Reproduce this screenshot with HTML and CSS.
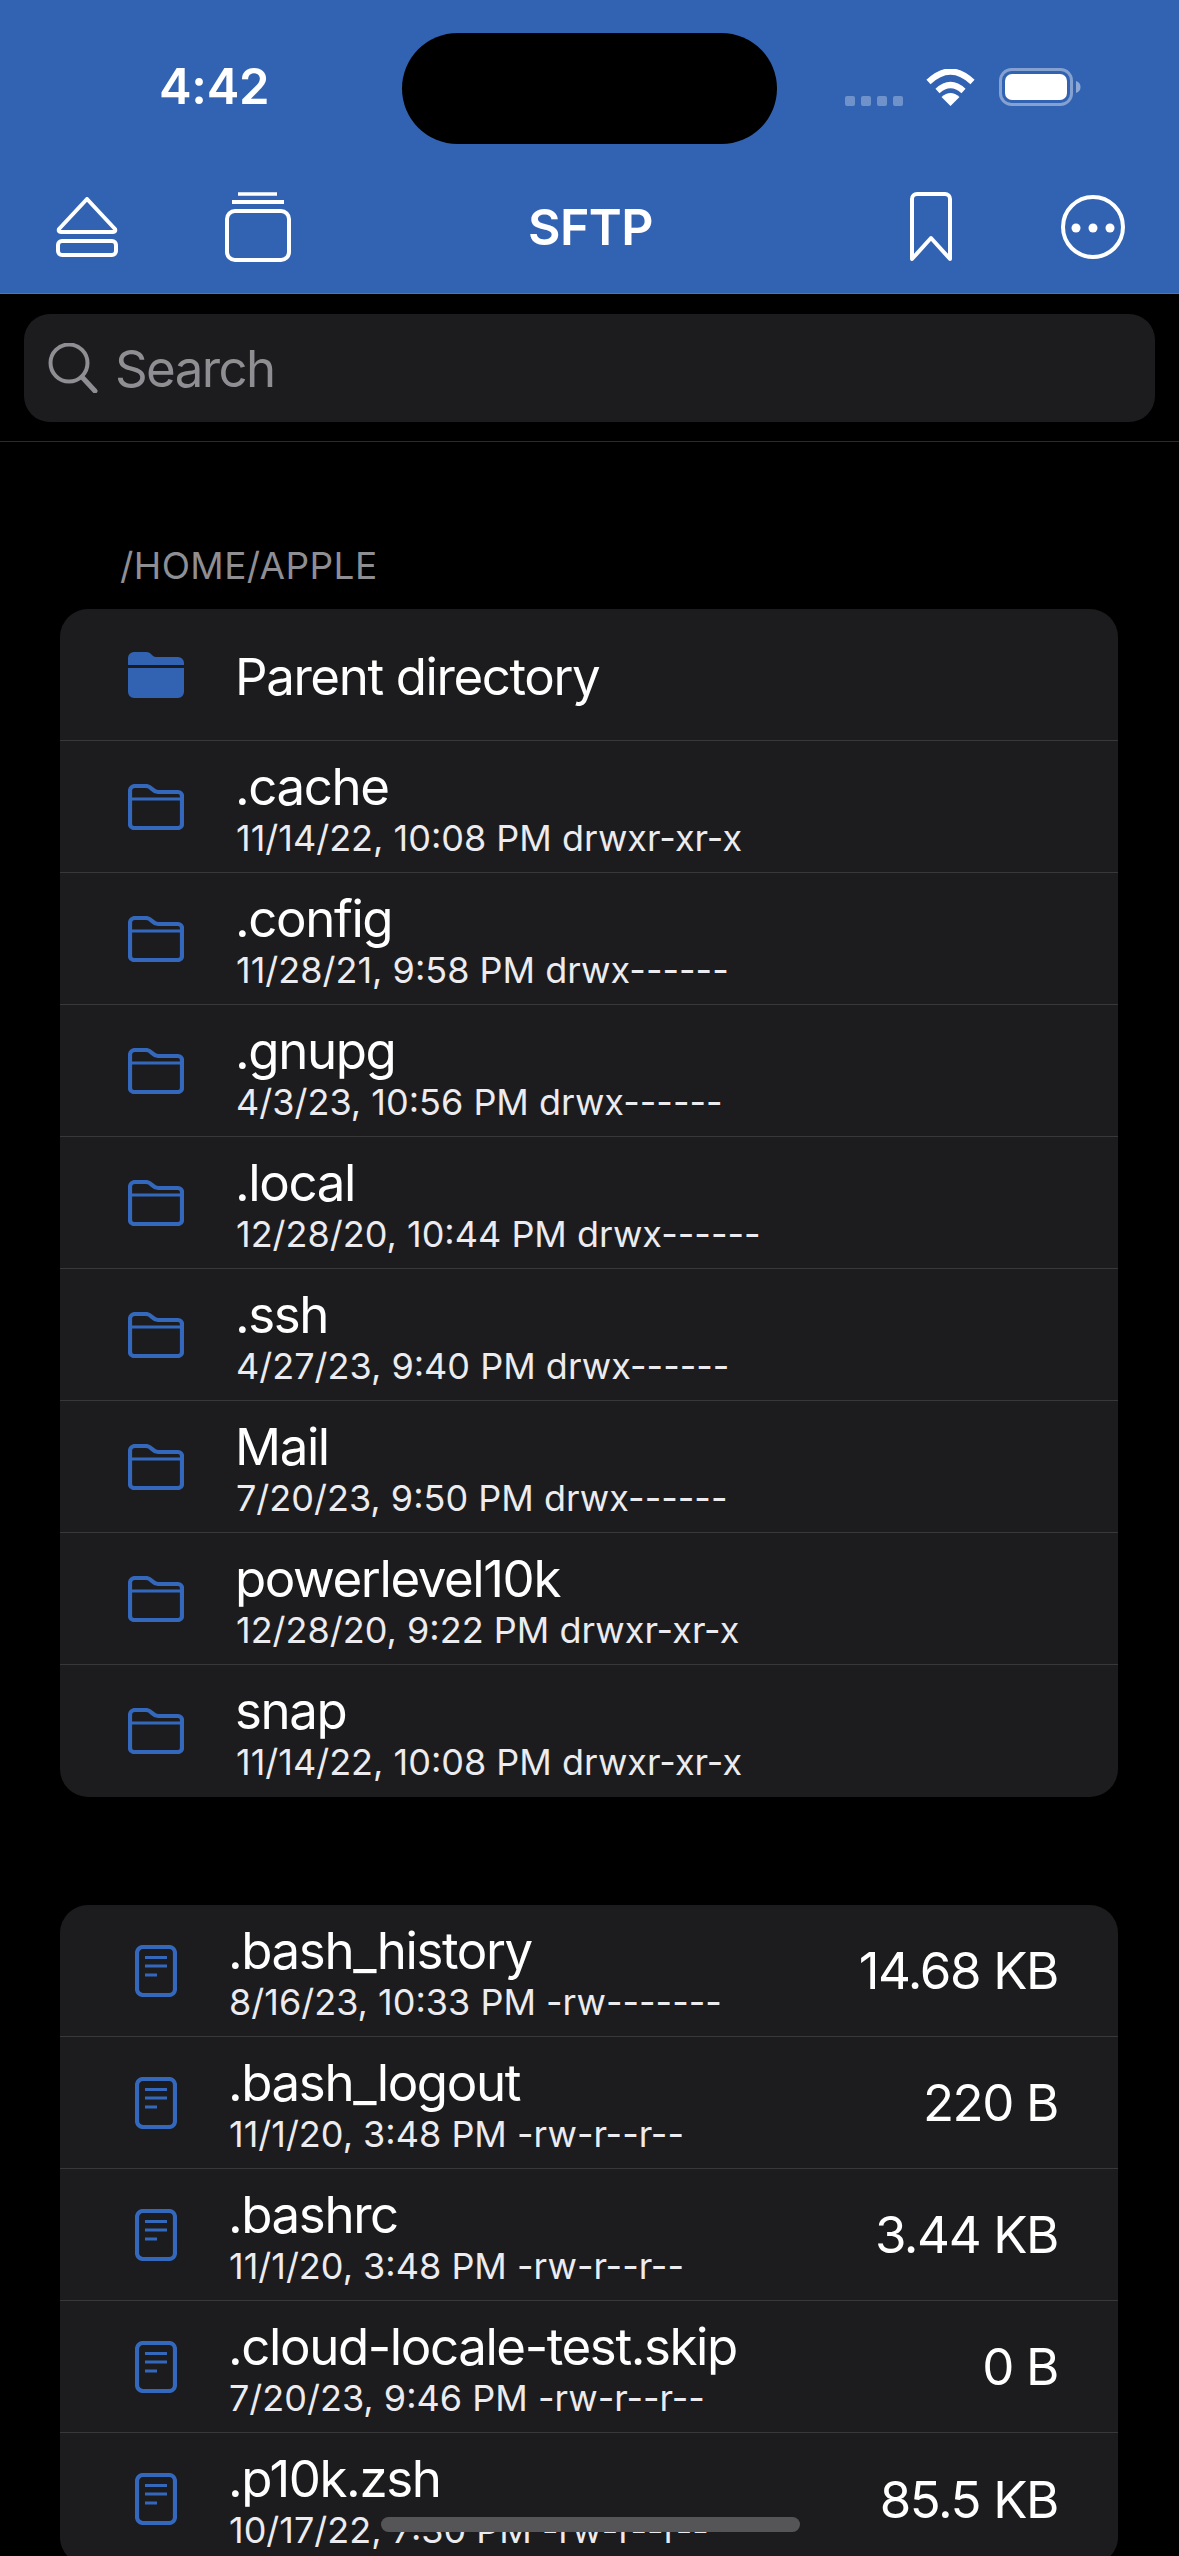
FILE: index.html
```html
<!DOCTYPE html>
<html lang="en">
<head>
    <meta charset="UTF-8">
    <meta name="viewport" content="width=device-width, initial-scale=1.0">
    <title>SFTP</title>
    <link rel="stylesheet" href="styles.css">
</head>
<body>
    <svg class="sprite" aria-hidden="true">
        <symbol id="folder-line" viewBox="0 0 56 46">
            <path d="M2 7a5 5 0 0 1 5-5h11c3 0 4 1 6 3s3 3 6 3h20a4 4 0 0 1 4 4v28a4 4 0 0 1-4 4H6a4 4 0 0 1-4-4Z" fill="none" stroke="#3468bd" stroke-width="4.200"/>
            <path d="M2 15H54" stroke="#3468bd" stroke-width="3"/>
        </symbol>
        <symbol id="folder-fill" viewBox="0 0 56 46">
            <path d="M0 6a6 6 0 0 1 6-6h12c3 0 4 1 6 3s3 2 6 2h20a6 6 0 0 1 6 6v29a6 6 0 0 1-6 6H6a6 6 0 0 1-6-6Z" fill="#3263b3"/>
            <path d="M0 14.500H56" stroke="#1c1c1e" stroke-width="3"/>
        </symbol>
        <symbol id="file-line" viewBox="0 0 42 52">
            <rect x="2" y="2" width="38" height="48" rx="6" fill="none" stroke="#3468bd" stroke-width="4.200"/>
            <path d="M10 12.500H32M10 21H32M10 30H22" stroke="#3468bd" stroke-width="3"/>
        </symbol>
    </svg>

    <div class="phone">
        <div class="header">
            <div class="status-bar">
                <span class="clock">4:42</span>
                <div class="notch"></div>
                <div class="status-icons">
                    <div class="signal"><i></i><i></i><i></i><i></i></div>
                    <svg class="wifi" viewBox="0 0 51 37">
                        <path d="M3.500 13Q25.500-8 47.500 13M12.500 22Q25.500 10 38.500 22" fill="none" stroke="#fff" stroke-width="6"/>
                        <path d="M25.500 37L16.500 28Q25.500 20 34.500 28Z" fill="#fff"/>
                    </svg>
                    <svg class="battery" viewBox="0 0 82 38">
                        <rect x="1.500" y="1.500" width="71" height="35" rx="11" fill="none" stroke="#fff" stroke-opacity=".4" stroke-width="3"/>
                        <rect x="6" y="6" width="62" height="26" rx="7" fill="#fff"/>
                        <path d="M77 13c3 1 4.500 3 4.500 6s-1.500 5-4.500 6Z" fill="#fff" fill-opacity=".45"/>
                    </svg>
                </div>
            </div>
            <div class="nav-bar">
                <div class="nav-group">
                    <svg class="nav-icon eject" viewBox="0 0 62 60">
                        <path d="M31 2L59 32Q60 35 57 35H5Q2 35 3 32Z" fill="none" stroke="#fff" stroke-width="4" stroke-linejoin="round"/>
                        <rect x="2" y="44" width="58" height="14" rx="4" fill="none" stroke="#fff" stroke-width="4"/>
                    </svg>
                    <svg class="nav-icon stack" viewBox="0 0 66 70">
                        <path d="M13 2H52" stroke="#fff" stroke-width="3.500"/>
                        <path d="M7 10H59" stroke="#fff" stroke-width="4"/>
                        <rect x="2" y="19" width="62" height="49" rx="8" fill="none" stroke="#fff" stroke-width="4"/>
                    </svg>
                </div>
                <div class="nav-title">SFTP</div>
                <div class="nav-group nav-right">
                    <svg class="nav-icon bookmark" viewBox="0 0 42 70">
                        <path d="M2 67V7a5 5 0 0 1 5-5H35a5 5 0 0 1 5 5V67L21 46Z" fill="none" stroke="#fff" stroke-width="4" stroke-linejoin="round"/>
                    </svg>
                    <svg class="nav-icon more" viewBox="0 0 64 64">
                        <circle cx="32" cy="32" r="30" fill="none" stroke="#fff" stroke-width="4"/>
                        <circle cx="15" cy="33" r="4.500" fill="#fff"/>
                        <circle cx="32" cy="33" r="4.500" fill="#fff"/>
                        <circle cx="49" cy="33" r="4.500" fill="#fff"/>
                    </svg>
                </div>
            </div>
        </div>

        <div class="search-wrap">
            <div class="search-box">
                <svg class="search-icon" viewBox="0 0 50 50">
                    <circle cx="21" cy="20" r="18.500" fill="none" stroke="#8e8e93" stroke-width="4"/>
                    <path d="M34 34L47 48" stroke="#8e8e93" stroke-width="5" stroke-linecap="round"/>
                </svg>
                <span class="search-text">Search</span>
            </div>
        </div>

        <div class="section-label">/HOME/APPLE</div>
        <div class="card">
            <div class="row folder-row">
                <svg class="folder-icon"><use href="#folder-fill"/></svg>
                <div class="row-text"><div class="name">Parent directory</div></div>
            </div>
            <div class="row folder-row">
                <svg class="folder-icon"><use href="#folder-line"/></svg>
                <div class="row-text"><div class="name">.cache</div><div class="meta">11/14/22, 10:08 PM drwxr-xr-x</div></div>
            </div>
            <div class="row folder-row">
                <svg class="folder-icon"><use href="#folder-line"/></svg>
                <div class="row-text"><div class="name">.config</div><div class="meta">11/28/21, 9:58 PM drwx------</div></div>
            </div>
            <div class="row folder-row">
                <svg class="folder-icon"><use href="#folder-line"/></svg>
                <div class="row-text"><div class="name">.gnupg</div><div class="meta">4/3/23, 10:56 PM drwx------</div></div>
            </div>
            <div class="row folder-row">
                <svg class="folder-icon"><use href="#folder-line"/></svg>
                <div class="row-text"><div class="name">.local</div><div class="meta">12/28/20, 10:44 PM drwx------</div></div>
            </div>
            <div class="row folder-row">
                <svg class="folder-icon"><use href="#folder-line"/></svg>
                <div class="row-text"><div class="name">.ssh</div><div class="meta">4/27/23, 9:40 PM drwx------</div></div>
            </div>
            <div class="row folder-row">
                <svg class="folder-icon"><use href="#folder-line"/></svg>
                <div class="row-text"><div class="name">Mail</div><div class="meta">7/20/23, 9:50 PM drwx------</div></div>
            </div>
            <div class="row folder-row">
                <svg class="folder-icon"><use href="#folder-line"/></svg>
                <div class="row-text"><div class="name">powerlevel10k</div><div class="meta">12/28/20, 9:22 PM drwxr-xr-x</div></div>
            </div>
            <div class="row folder-row">
                <svg class="folder-icon"><use href="#folder-line"/></svg>
                <div class="row-text"><div class="name">snap</div><div class="meta">11/14/22, 10:08 PM drwxr-xr-x</div></div>
            </div>
        </div>

        <div class="card files-card">
            <div class="row file-row">
                <svg class="file-icon"><use href="#file-line"/></svg>
                <div class="row-text"><div class="name">.bash_history</div><div class="meta">8/16/23, 10:33 PM -rw-------</div></div>
                <div class="size">14.68 KB</div>
            </div>
            <div class="row file-row">
                <svg class="file-icon"><use href="#file-line"/></svg>
                <div class="row-text"><div class="name">.bash_logout</div><div class="meta">11/1/20, 3:48 PM -rw-r--r--</div></div>
                <div class="size">220 B</div>
            </div>
            <div class="row file-row">
                <svg class="file-icon"><use href="#file-line"/></svg>
                <div class="row-text"><div class="name">.bashrc</div><div class="meta">11/1/20, 3:48 PM -rw-r--r--</div></div>
                <div class="size">3.44 KB</div>
            </div>
            <div class="row file-row">
                <svg class="file-icon"><use href="#file-line"/></svg>
                <div class="row-text"><div class="name">.cloud-locale-test.skip</div><div class="meta">7/20/23, 9:46 PM -rw-r--r--</div></div>
                <div class="size">0 B</div>
            </div>
            <div class="row file-row">
                <svg class="file-icon"><use href="#file-line"/></svg>
                <div class="row-text"><div class="name">.p10k.zsh</div><div class="meta">10/17/22, 7:30 PM -rw-r--r--</div></div>
                <div class="size">85.5 KB</div>
            </div>
        </div>

        <div class="home-indicator"></div>
    </div>
</body>
</html>
```

FILE: styles.css
```css
* {
    margin: 0;
    padding: 0;
    box-sizing: border-box;
}

body {
    font-family: 'Inter', 'Liberation Sans', sans-serif;
    background: #000;
    color: #fff;
}

.sprite {
    position: absolute;
    width: 0;
    height: 0;
}

.phone {
    position: relative;
    width: 1179px;
    height: 2556px;
    overflow: hidden;
    background: #000;
}

/* blue top part */
.header {
    height: 294px;
    background: #3263b3;
    border-bottom: 1px solid #4a76bd;
}

.status-bar {
    display: flex;
    height: 170px;
    padding-left: 159px;
}

.clock {
    width: 243px;
    margin-top: 58px;
    font-size: 49px;
    line-height: 58px;
    font-weight: 600;
    letter-spacing: -0.3px;
}

.notch {
    width: 375px;
    height: 111px;
    margin-top: 33px;
    background: #000;
    border-radius: 56px;
}

.status-icons {
    display: flex;
    align-items: flex-start;
    margin-left: 68px;
}

.signal {
    display: flex;
    gap: 6px;
    margin-top: 96px;
}

.signal i {
    width: 10px;
    height: 10px;
    border-radius: 2px;
    background: rgba(255, 255, 255, 0.3);
}

.wifi {
    width: 51px;
    height: 37px;
    margin: 69px 0 0 22px;
}

.battery {
    width: 82px;
    height: 38px;
    margin: 68px 0 0 23px;
}

.nav-bar {
    display: grid;
    grid-template-columns: 1fr auto 1fr;
    align-items: center;
    height: 123px;
    padding: 0 54px 9px 56px;
}

.nav-group {
    display: flex;
    align-items: center;
    gap: 107px;
}

.nav-right {
    justify-content: flex-end;
    gap: 109px;
}

.nav-title {
    font-size: 50px;
    font-weight: 600;
    letter-spacing: -0.5px;
}

.eject {
    width: 62px;
    height: 60px;
}

.stack {
    width: 66px;
    height: 70px;
}

.bookmark {
    width: 42px;
    height: 70px;
}

.more {
    width: 64px;
    height: 64px;
}

/* search */
.search-wrap {
    height: 148px;
    padding: 20px 24px 0 24px;
    border-bottom: 1px solid #2b2b2d;
}

.search-box {
    display: flex;
    align-items: center;
    height: 108px;
    padding-left: 24px;
    background: #1c1c1e;
    border-radius: 26px;
}

.search-icon {
    width: 50px;
    height: 50px;
}

.search-text {
    margin-left: 17px;
    font-size: 51px;
    letter-spacing: -1.6px;
    color: #8e8e93;
}

.section-label {
    padding: 102px 0 0 120px;
    height: 167px;
    font-size: 37px;
    line-height: 44px;
    letter-spacing: 0.4px;
    color: #8e8e93;
}

/* lists */
.card {
    width: 1058px;
    margin-left: 60px;
    background: #1c1c1e;
    border-radius: 28px;
    overflow: hidden;
}

.files-card {
    margin-top: 108px;
}

.row {
    display: flex;
    align-items: center;
    height: 132px;
    border-bottom: 1px solid #38383a;
}

.row:last-child {
    border-bottom: none;
}

.folder-row {
    padding-left: 68px;
}

.file-row {
    padding: 0 60px 0 75px;
}

.folder-icon {
    flex: none;
    width: 56px;
    height: 46px;
    margin-right: 52px;
}

.file-icon {
    flex: none;
    width: 42px;
    height: 52px;
    margin-right: 52px;
}

.row-text {
    flex: 1;
    padding-top: 4px;
}

.name {
    margin-left: -1px;
    font-size: 51px;
    line-height: 58px;
    letter-spacing: -1.4px;
}

.meta {
    font-size: 36px;
    line-height: 44px;
    color: #ebebf0;
}

.size {
    font-size: 51px;
    letter-spacing: -1.4px;
}

.home-indicator {
    position: absolute;
    left: 381px;
    top: 2517px;
    width: 419px;
    height: 15px;
    background: #555557;
    border-radius: 8px;
}
```
